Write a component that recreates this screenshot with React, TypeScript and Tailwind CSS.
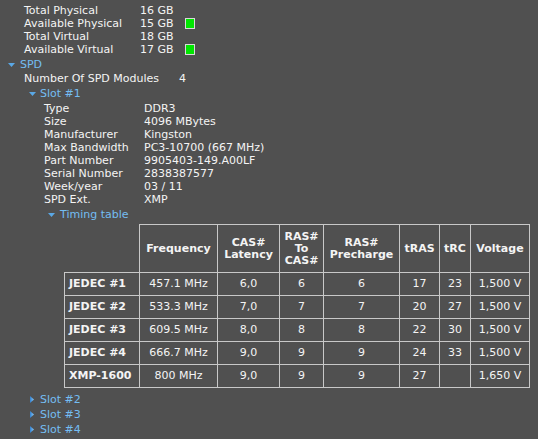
import React from "react";

const memory = [
  { label: "Total Physical", value: "16 GB", bar: false },
  { label: "Available Physical", value: "15 GB", bar: true },
  { label: "Total Virtual", value: "18 GB", bar: false },
  { label: "Available Virtual", value: "17 GB", bar: true },
];

const slot = [
  ["Type", "DDR3"],
  ["Size", "4096 MBytes"],
  ["Manufacturer", "Kingston"],
  ["Max Bandwidth", "PC3-10700 (667 MHz)"],
  ["Part Number", "9905403-149.A00LF"],
  ["Serial Number", "2838387577"],
  ["Week/year", "03 / 11"],
  ["SPD Ext.", "XMP"],
];

const timings = [
  ["JEDEC #1", "457.1 MHz", "6,0", "6", "6", "17", "23", "1,500 V"],
  ["JEDEC #2", "533.3 MHz", "7,0", "7", "7", "20", "27", "1,500 V"],
  ["JEDEC #3", "609.5 MHz", "8,0", "8", "8", "22", "30", "1,500 V"],
  ["JEDEC #4", "666.7 MHz", "9,0", "9", "9", "24", "33", "1,500 V"],
  ["XMP-1600", "800 MHz", "9,0", "9", "9", "27", "", "1,650 V"],
];

const Down = () => (
  <svg width="7" height="4" viewBox="0 0 7 4" className="shrink-0">
    <polygon points="0,0 7,0 3.5,4" fill="#5aa8e6" />
  </svg>
);

const Right = () => (
  <svg width="4" height="7" viewBox="0 0 4 7" className="shrink-0">
    <defs>
      <linearGradient id="rt" x1="0" x2="1" y1="0" y2="0">
        <stop offset="0" stopColor="#2f7fd0" />
        <stop offset="1" stopColor="#8ccaf5" />
      </linearGradient>
    </defs>
    <polygon points="0,0 4,3.5 0,7" fill="url(#rt)" />
  </svg>
);

const Cell = ({ children, className = "" }: { children?: React.ReactNode; className?: string }) => (
  <td className={`border border-[#c8c8c8] p-0 text-center ${className}`}>{children}</td>
);

export default function App() {
  return (
    <div className="min-h-screen w-full bg-[#505050] pt-[4px] font-['DejaVu_Sans',sans-serif] text-[11px] leading-[13px] text-[#f4f4f4]">
      {memory.map((m) => (
        <div key={m.label} className="flex h-[13px] items-center pl-[24px]">
          <span className="w-[116px]">{m.label}</span>
          <span className="w-[45px]">{m.value}</span>
          {m.bar && <span className="h-[11px] w-[10px] border border-[#d8d8d8] bg-[#00e600]" />}
        </div>
      ))}

      <div className="mt-[1px] flex h-[15px] items-center gap-[5px] pl-[8px] text-[#74bdf2]">
        <Down />
        <span>SPD</span>
      </div>

      <div className="flex h-[13px] items-center pl-[24px]">
        <span className="w-[155px]">Number Of SPD Modules</span>
        <span>4</span>
      </div>

      <div className="flex h-[17px] items-center gap-[4px] pl-[29px] text-[#74bdf2]">
        <Down />
        <span>Slot #1</span>
      </div>

      {slot.map(([k, v]) => (
        <div key={k} className="flex h-[13px] items-center pl-[44px]">
          <span className="w-[100px]">{k}</span>
          <span>{v}</span>
        </div>
      ))}

      <div className="flex h-[17px] items-center gap-[5px] pl-[48px] text-[#74bdf2]">
        <Down />
        <span>Timing table</span>
      </div>

      <table className="ml-[64px] mt-[1px] table-fixed border-collapse leading-[12px]">
        <colgroup>
          <col className="w-[75px]" />
          <col className="w-[78px]" />
          <col className="w-[62px]" />
          <col className="w-[44px]" />
          <col className="w-[76px]" />
          <col className="w-[40px]" />
          <col className="w-[31px]" />
          <col className="w-[59px]" />
        </colgroup>
        <thead>
          <tr className="h-[48px] font-bold">
            <td className="border-b border-r border-[#c8c8c8] p-0" />
            <Cell>Frequency</Cell>
            <Cell>
              CAS#
              <br />
              Latency
            </Cell>
            <Cell>
              RAS#
              <br />
              To
              <br />
              CAS#
            </Cell>
            <Cell>
              RAS#
              <br />
              Precharge
            </Cell>
            <Cell>tRAS</Cell>
            <Cell>tRC</Cell>
            <Cell>Voltage</Cell>
          </tr>
        </thead>
        <tbody>
          {timings.map((r) => (
            <tr key={r[0]} className="h-[23px]">
              <Cell className="pl-[4px] text-left font-bold">{r[0]}</Cell>
              {r.slice(1).map((c, i) => (
                <Cell key={i}>{c}</Cell>
              ))}
            </tr>
          ))}
        </tbody>
      </table>

      <div className="mt-[4px]">
        {["Slot #2", "Slot #3", "Slot #4"].map((s) => (
          <div key={s} className="flex h-[15px] items-center gap-[6px] pl-[30px] text-[#74bdf2]">
            <Right />
            <span>{s}</span>
          </div>
        ))}
      </div>
    </div>
  );
}
